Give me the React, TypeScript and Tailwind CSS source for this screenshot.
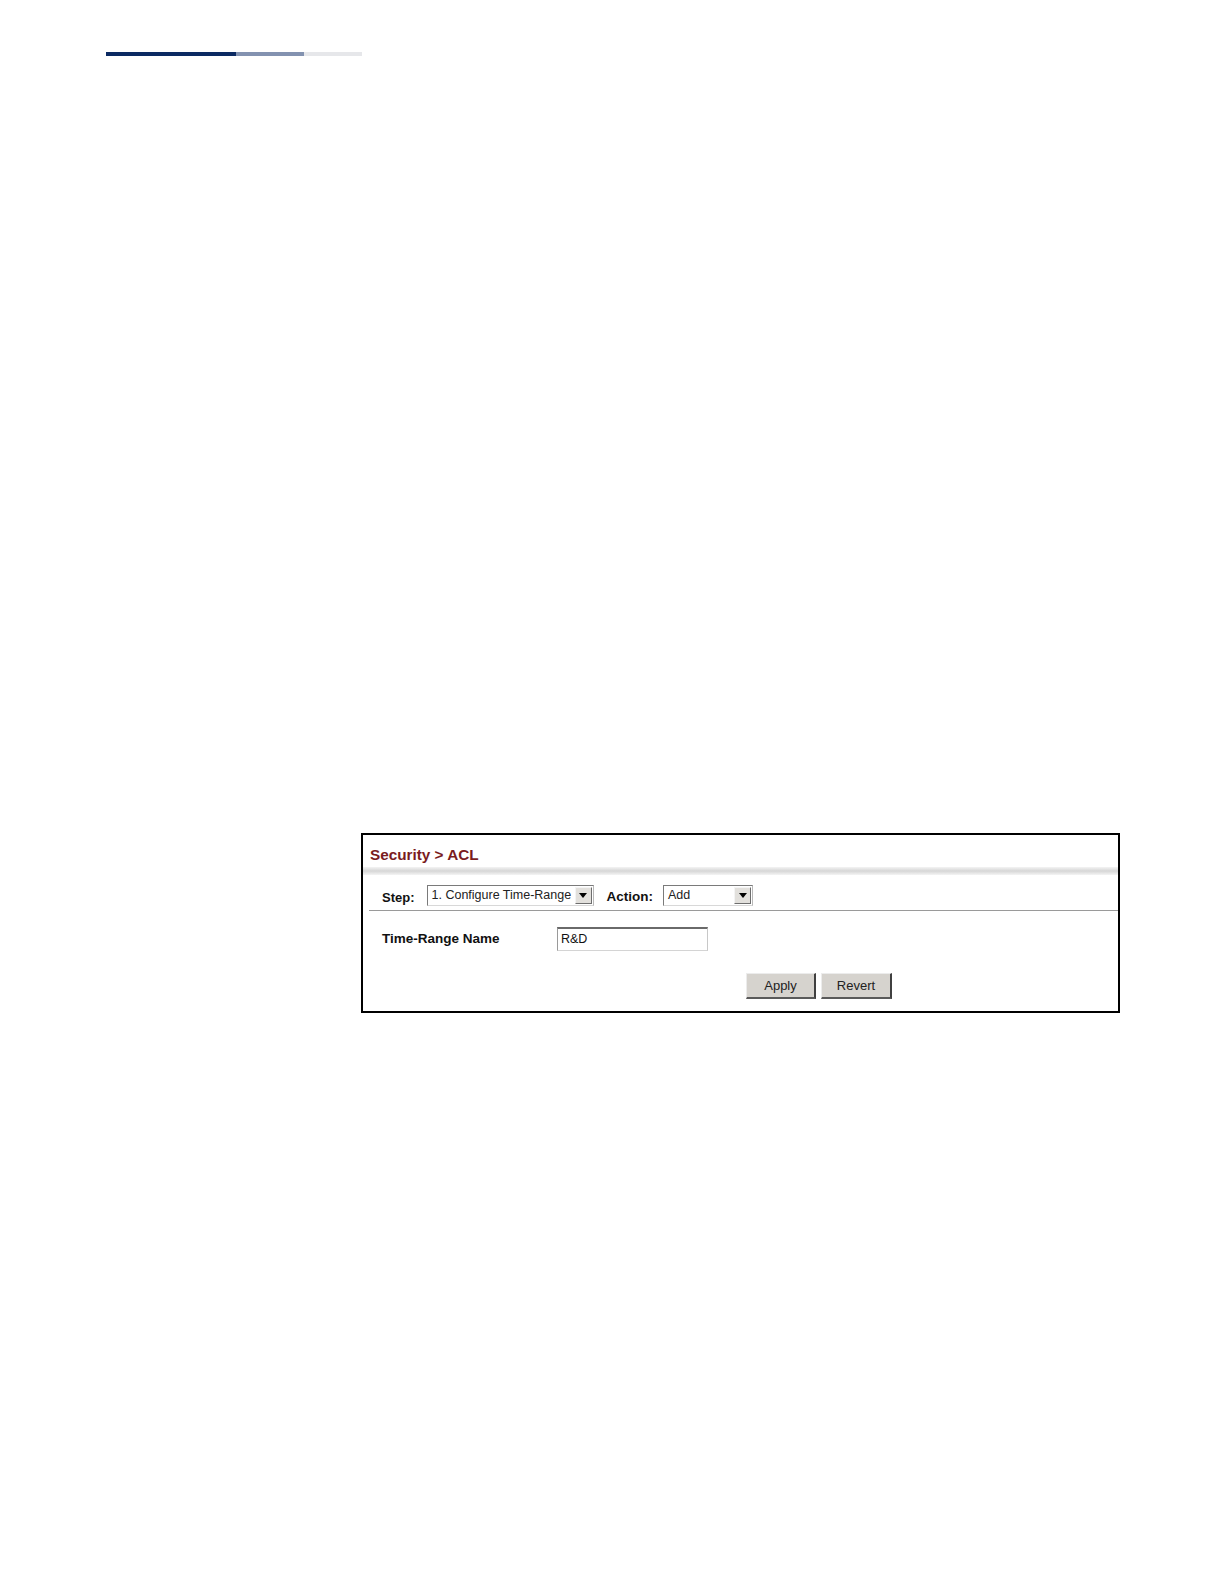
import React from "react";

function Arrow() {
  return (
    <div className="w-[17px] h-[17px] bg-[#e2e0dc] border-t border-l border-t-[#f4f4f4] border-l-[#f4f4f4] border-r border-b border-r-[#6e6e6e] border-b-[#6e6e6e] flex items-center justify-center">
      <svg width="8" height="5" viewBox="0 0 8 5">
        <polygon points="0,0 8,0 4,5" fill="#000" />
      </svg>
    </div>
  );
}

function Select({ width, label }: { width: string; label: string }) {
  return (
    <div
      className={`${width} h-[21px] bg-white border border-t-[#7a7a7a] border-l-[#7a7a7a] border-r-[#b8b8b8] border-b-[#d8d8d8] flex items-center justify-between pl-[4px] pr-[1px]`}
    >
      <span className="text-[12.5px] text-[#222] leading-none">{label}</span>
      <Arrow />
    </div>
  );
}

function Button({ label, width }: { label: string; width: string }) {
  return (
    <div
      className={`${width} h-[26px] bg-[#d6d3ce] border-t border-l border-t-[#ececec] border-l-[#ececec] border-r-2 border-b-2 border-r-[#404040] border-b-[#5a5a5a] flex items-center justify-center text-[13px] text-[#222]`}
    >
      {label}
    </div>
  );
}

export default function App() {
  return (
    <div
      className="w-[1224px] h-[1584px] bg-white overflow-hidden"
      style={{ fontFamily: '"Liberation Sans", Arial, sans-serif' }}
    >
      <div className="pt-[52px] pl-[106px] flex">
        <div className="w-[130px] h-[4px] bg-[#0b2a62]" />
        <div className="w-[68px] h-[4px] bg-[#8392b0]" />
        <div className="w-[58px] h-[4px] bg-[#e6e7ea]" />
      </div>

      <div className="ml-[361px] mt-[777px] w-[759px] border-2 border-black bg-white">
        <div className="h-[32px] pt-[11px] pl-[7px]">
          <div className="text-[15.3px] leading-[18px] font-bold text-[#7a1c1e]">
            Security &gt; ACL
          </div>
        </div>
        <div className="h-[8px] bg-gradient-to-b from-[#f4f4f4] via-[#d6d6d6] to-[#f4f4f4]" />
        <div className="mt-[10px] h-[21px] flex items-center pl-[19px]">
          <span className="text-[13px] font-bold text-[#111] mr-[12px] mt-[4px]">Step:</span>
          <Select width="w-[167px]" label="1. Configure Time-Range" />
          <span className="text-[13.5px] font-bold text-[#111] ml-[13px] mr-[10px] mt-[4px]">Action:</span>
          <Select width="w-[90px]" label="Add" />
        </div>
        <div className="mt-[4px] ml-[6px] h-px bg-[#9a9a9a]" />
        <div className="mt-[16px] h-[24px] flex items-center pl-[19px]">
          <span className="w-[175px] text-[13.5px] font-bold text-[#111]">Time-Range Name</span>
          <div className="w-[151px] h-[24px] border border-t-2 border-t-[#6a6a6a] border-l-[#9a9a9a] border-r-[#c8c8c8] border-b-[#d4d4d4] flex items-center pl-[3px] text-[12.5px] text-[#111]">
            R&amp;D
          </div>
        </div>
        <div className="mt-[22px] pl-[383px] flex gap-[5px] pb-[12px]">
          <Button label="Apply" width="w-[70px]" />
          <Button label="Revert" width="w-[71px]" />
        </div>
      </div>
    </div>
  );
}
